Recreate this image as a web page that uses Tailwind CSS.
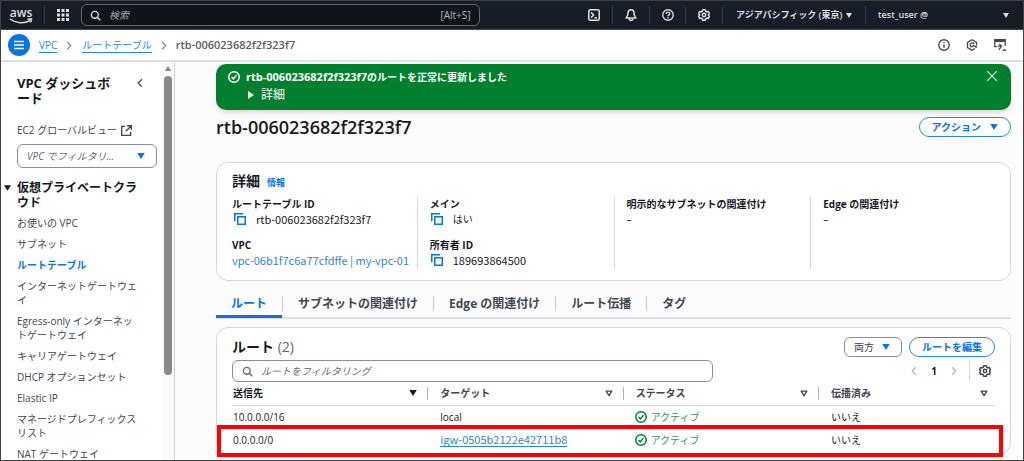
<!DOCTYPE html>
<html lang="ja">
<head>
  <meta charset="UTF-8" />
  <meta name="viewport" content="width=device-width, initial-scale=1.0" />
  <title>rtb-006023682f2f323f7 | VPC</title>
  <script src="https://cdn.jsdelivr.net/npm/@tailwindcss/browser@4"></script>
</head>
<body class="h-screen overflow-hidden flex flex-col border border-[#424242] bg-[#fcfcfd] text-[#16191f] text-[10px] leading-[14px] font-['Open_Sans','Noto_Sans_CJK_JP',sans-serif]">

  <svg class="hidden">
    <symbol id="search" viewBox="0 0 16 16"><g fill="none" stroke="currentColor" stroke-width="2"><circle cx="7" cy="7" r="5" /><path d="m10.5 10.5 4.5 4.5" /></g></symbol>
    <symbol id="gear" viewBox="0 0 16 16"><g fill="none" stroke="currentColor" stroke-width="2" stroke-linejoin="round"><path d="M6.3 1h3.4l.6 2 1.6.9 2-.5 1.3 2.8L13.800 8l1.400 1.800-1.300 2.800-2-.5-1.600.9-.6 2H6.300l-.6-2-1.600-.9-2 .5L.8 9.800 2.200 8 .8 6.200l1.300-2.800 2 .5L5.700 3z" /><circle cx="8" cy="8" r="2.200" /></g></symbol>
    <symbol id="check" viewBox="0 0 16 16"><g fill="none" stroke="currentColor" stroke-width="2"><circle cx="8" cy="8" r="7" /><path d="m4.800 8 2.400 2.500L11.300 5.500" /></g></symbol>
    <symbol id="copy" viewBox="0 0 16 16"><g fill="none" stroke="currentColor" stroke-width="2"><path d="M1 11V1h11" /><path d="M5 5H15V15H5z" /></g></symbol>
    <symbol id="down" viewBox="0 0 10 8"><path fill="currentColor" d="M0 0h10L5 8z" /></symbol>
    <symbol id="sort" viewBox="0 0 10 8"><path fill="none" stroke="currentColor" stroke-width="1.700" stroke-linejoin="round" d="M1.500 1h7L5 6.800z" /></symbol>
    <symbol id="next" viewBox="0 0 8 12"><path fill="none" stroke="currentColor" stroke-width="1.600" d="m1.500 1 5 5-5 5" /></symbol>
    <symbol id="prev" viewBox="0 0 8 12"><path fill="none" stroke="currentColor" stroke-width="1.600" d="m6.500 1-5 5 5 5" /></symbol>
  </svg>

  <!-- Global header -->
  <header class="h-[29px] shrink-0 flex items-center bg-[#161d26] text-[#dedee3] border-b border-[#424650]">
    <a href="#" class="ml-2 w-6 flex flex-col items-center" aria-label="aws">
      <span class="text-[12px] leading-[11px] font-semibold">aws</span>
      <svg class="w-6 h-[6px]" viewBox="0 0 24 6" fill="none" stroke="currentColor" stroke-width="1.500"><path d="M1 1c6 4.500 14 5 20 1.500M18.500 1h4l-1 3.500" /></svg>
    </a>
    <div class="ml-[11px] w-px h-[18px] bg-[#333b47]"></div>
    <button class="ml-3 w-3 h-3" aria-label="サービス">
      <svg class="w-3 h-3" viewBox="0 0 12 12" fill="currentColor"><path d="M0 0h3v3H0zM4.500 0h3v3h-3zM9 0h3v3H9zM0 4.500h3v3H0zM4.500 4.500h3v3h-3zM9 4.500h3v3H9zM0 9h3v3H0zM4.500 9h3v3h-3zM9 9h3v3H9z" /></svg>
    </button>
    <label class="ml-3 w-[39%] h-[22px] flex items-center gap-2 px-2 rounded-[6px] border border-[#656871] bg-[#0f141a]">
      <svg class="w-[11px] h-[11px]"><use href="#search" /></svg>
      <input type="search" placeholder="検索" aria-label="検索" class="flex-1 min-w-0 outline-none italic text-[10px] placeholder:text-[#a4a4ad]" />
      <span class="text-[#b4b4bb]">[Alt+S]</span>
    </label>
    <div class="ml-auto h-[18px] flex items-center divide-x divide-[#333b47]">
      <button class="w-[37px] h-full flex items-center justify-center" aria-label="CloudShell">
        <svg class="w-3 h-3" viewBox="0 0 16 16" fill="none" stroke="currentColor" stroke-width="2"><rect x="1" y="1" width="14" height="14" rx="2" /><path d="m4 4.500 3.500 3.500L4 11.500M8.500 11.500H12" /></svg>
      </button>
      <button class="w-[37px] h-full flex items-center justify-center" aria-label="通知">
        <svg class="w-3 h-3" viewBox="0 0 16 16" fill="none" stroke="currentColor" stroke-width="2" stroke-linejoin="round"><path d="M8 1C5 1 4 3.500 4 5.500c0 3-1 4-2.500 6.500h13C13 9.500 12 8.500 12 5.500 12 3.500 11 1 8 1z" /><path d="M5.500 12.500c0 3.500 5 3.500 5 0" /></svg>
      </button>
      <button class="w-[36px] h-full flex items-center justify-center" aria-label="ヘルプ">
        <svg class="w-3 h-3" viewBox="0 0 16 16" fill="none" stroke="currentColor" stroke-width="1.800"><circle cx="8" cy="8" r="7" /><path d="M5.700 6.500c0-3 4.600-3 4.600-.3C10.300 8 8 7.700 8 9.700M8 10.800v1.800" /></svg>
      </button>
      <button class="w-[37px] h-full flex items-center justify-center" aria-label="設定">
        <svg class="w-3 h-3"><use href="#gear" /></svg>
      </button>
      <button class="w-[143px] h-full flex items-center gap-1 px-[13px] text-[9px] font-semibold whitespace-nowrap">アジアパシフィック (東京)
        <svg class="w-[6px] h-[5px] shrink-0"><use href="#down" /></svg>
      </button>
      <button class="w-[157px] h-full flex items-center justify-between pl-3 pr-[14px] text-[9px] font-semibold">test_user @
        <svg class="w-[6px] h-[5px]"><use href="#down" /></svg>
      </button>
    </div>
  </header>

  <!-- Breadcrumb -->
  <nav class="h-[32px] shrink-0 flex items-center bg-white border-b-2 border-[#dedee3] pl-[7px] pr-[17px] text-[#424650]">
    <button class="w-[22px] h-[22px] rounded-full bg-[#0972e8] text-white flex items-center justify-center" aria-label="メニュー">
      <svg class="w-[10px] h-[10px]" viewBox="0 0 10 10" stroke="currentColor" stroke-width="1.500"><path d="M0 1.500h10M0 5h10M0 8.500h10" /></svg>
    </button>
    <a href="#" class="ml-[9px] text-[#2b86e0] border-b border-[#2b86e0]">VPC</a>
    <svg class="mx-[9px] w-[6px] h-[9px] text-[#8c8c94]"><use href="#next" /></svg>
    <a href="#" class="ml-px text-[#2b86e0] border-b border-[#2b86e0]">ルートテーブル</a>
    <svg class="mx-[9px] w-[6px] h-[9px] text-[#8c8c94]"><use href="#next" /></svg>
    <span class="text-[11px] font-semibold text-[#5a5d66]">rtb-006023682f2f323f7</span>
    <div class="ml-auto flex gap-4">
      <button aria-label="情報"><svg class="w-3 h-3" viewBox="0 0 16 16" fill="none" stroke="currentColor" stroke-width="1.700"><circle cx="8" cy="8" r="7" /><path d="M8 7v5M8 4v1.800" /></svg></button>
      <button aria-label="診断"><svg class="w-3 h-3" viewBox="0 0 16 16" fill="none" stroke="currentColor" stroke-width="1.700"><path d="M14 9V4.500L8 1 2 4.500v7L8 15l4-2.300" /><path d="M11 6.500C9.500 4.500 5.500 5 5.500 8s3 3 4 1M9 8l5.500 3.500" /></svg></button>
      <button aria-label="ターミナル"><svg class="w-3 h-3" viewBox="0 0 16 16" fill="none" stroke="currentColor" stroke-width="1.700"><path d="M3.500 10H1V1h14v8M1 3h14" /><path d="M5 9.500h5M7 6.500l3 3-3.500 5M11.500 15H16" /></svg></button>
    </div>
  </nav>

  <div class="flex-1 min-h-0 flex">
    <!-- Side navigation -->
    <aside class="w-[174px] shrink-0 flex bg-white border-r border-[#d0d0d6] overflow-hidden">
      <div class="flex-1 pl-4 pt-[14px] text-[#424650] break-all">
        <div class="flex items-start">
          <h2 class="w-[100px] text-[13px] leading-[15px] font-bold text-[#16191f]">VPC ダッシュボード</h2>
          <button class="ml-5 mt-[2px]" aria-label="閉じる"><svg class="w-[6px] h-[10px]"><use href="#prev" /></svg></button>
        </div>
        <a href="#" class="mt-[17px] flex items-center gap-1 whitespace-nowrap">EC2 グローバルビュー
          <svg class="w-[11px] h-[11px]" viewBox="0 0 16 16" fill="none" stroke="currentColor" stroke-width="2"><path d="M6 2H1v13h13v-5M9 1h6v6M15 1 7 9" /></svg>
        </a>
        <div class="mt-[7px] w-[140px] h-6 relative">
          <select aria-label="VPC でフィルタリング" class="w-full h-full appearance-none rounded-[6px] border border-[#8c8c94] bg-white pl-[9px] italic text-[#656871]">
            <option>VPC でフィルタリ...</option>
          </select>
          <svg class="absolute right-3 top-[9px] w-2 h-[6px] text-[#0972e8] pointer-events-none"><use href="#down" /></svg>
        </div>
        <details open class="mt-3">
          <summary class="list-none relative w-[125px] text-[12px] leading-[15px] font-bold text-[#16191f]">
            <svg class="absolute -left-[13px] top-[5px] w-[7px] h-[6px]"><use href="#down" /></svg>仮想プライベートクラウド
          </summary>
          <ul class="mt-[6px] w-[125px] flex flex-col gap-[7px]">
            <li><a href="#">お使いの VPC</a></li>
            <li><a href="#">サブネット</a></li>
            <li><a href="#" class="font-bold text-[#0972e8]">ルートテーブル</a></li>
            <li><a href="#">インターネットゲートウェイ</a></li>
            <li><a href="#">Egress-only インターネットゲートウェイ</a></li>
            <li><a href="#">キャリアゲートウェイ</a></li>
            <li><a href="#">DHCP オプションセット</a></li>
            <li><a href="#">Elastic IP</a></li>
            <li><a href="#">マネージドプレフィックスリスト</a></li>
            <li><a href="#">NAT ゲートウェイ</a></li>
          </ul>
        </details>
      </div>
      <!-- scrollbar -->
      <div class="w-3 shrink-0 bg-[#fafafa] flex flex-col items-center pt-[4px]">
        <svg class="w-2 h-[5px] rotate-180 text-[#858585]"><use href="#down" /></svg>
        <div class="mt-[5px] w-2 h-[76%] rounded-full bg-[#8a8a8a]"></div>
      </div>
    </aside>

    <main class="flex-1 min-w-0 pl-[41px] pr-3 pt-[2px]">
      <!-- Flash message -->
      <div class="h-[46px] flex items-start rounded-[10px] bg-[#00802f] text-white px-3 pt-[6px] shadow-md">
        <svg class="mt-px w-3 h-3"><use href="#check" /></svg>
        <div class="ml-[6px] font-bold">
          <p><span class="text-[11px]">rtb-006023682f2f323f7</span>のルートを正常に更新しました</p>
          <button class="mt-[4px] ml-[2px] flex items-center gap-[7px] text-[12px] leading-[14px] font-normal">
            <svg class="w-[6px] h-2" viewBox="0 0 6 8"><path fill="currentColor" d="M0 0v8l6-4z" /></svg>詳細
          </button>
        </div>
        <button class="ml-auto mr-[2px] mt-px" aria-label="閉じる"><svg class="w-[10px] h-[10px]" viewBox="0 0 10 10" stroke="#d5ead9" stroke-width="1.200"><path d="m0 0 10 10M10 0 0 10" /></svg></button>
      </div>

      <div class="mt-[7px] h-5 flex items-center justify-between">
        <h1 class="text-[18px] leading-5 font-semibold">rtb-006023682f2f323f7</h1>
        <button class="h-5 px-3 flex items-center gap-[9px] rounded-full border border-[#2b86e0] bg-white font-bold text-[#0972e8]">アクション
          <svg class="w-2 h-[6px]"><use href="#down" /></svg>
        </button>
      </div>

      <!-- Details -->
      <section class="mt-[25px] h-[119px] rounded-[12px] border border-[#d5d5da] bg-white px-[3px] pt-[9px]">
        <h2 class="px-3 flex items-baseline gap-[7px] text-[14px] leading-[18px] font-bold">詳細 <a href="#" class="text-[9px] text-[#0972e8]">情報</a></h2>
        <div class="mt-[5px] h-[71px] grid grid-cols-4">
          <dl class="pl-3">
            <dt class="font-bold">ルートテーブル ID</dt>
            <dd class="mt-px pl-[2px] flex items-center gap-[10px] text-[11px] font-['Noto_Sans_CJK_JP',sans-serif]"><svg class="w-3 h-3 text-[#0972e8]"><use href="#copy" /></svg>rtb-006023682f2f323f7</dd>
            <dt class="mt-3 font-bold">VPC</dt>
            <dd class="mt-px text-[11px] font-['Noto_Sans_CJK_JP',sans-serif] whitespace-nowrap"><a href="#" class="text-[#2b86e0]">vpc-06b1f7c6a77cfdffe | my-vpc-01</a></dd>
          </dl>
          <dl class="pl-3 border-l border-[#d5d5da]">
            <dt class="font-bold">メイン</dt>
            <dd class="mt-px pl-px flex items-center gap-[10px]"><svg class="w-3 h-3 text-[#0972e8]"><use href="#copy" /></svg>はい</dd>
            <dt class="mt-3 font-bold">所有者 ID</dt>
            <dd class="mt-px pl-px flex items-center gap-[10px] text-[11px] font-['Noto_Sans_CJK_JP',sans-serif]"><svg class="w-3 h-3 text-[#0972e8]"><use href="#copy" /></svg>189693864500</dd>
          </dl>
          <dl class="pl-3 border-l border-[#d5d5da]">
            <dt class="font-bold">明示的なサブネットの関連付け</dt>
            <dd class="mt-px">–</dd>
          </dl>
          <dl class="pl-3 border-l border-[#d5d5da]">
            <dt class="font-bold">Edge の関連付け</dt>
            <dd class="mt-px">–</dd>
          </dl>
        </div>
      </section>

      <!-- Tabs -->
      <div role="tablist" class="mt-[5px] h-[33px] flex items-start border-b-2 border-[#dedee3] text-[12px] leading-[14px] font-bold text-[#424650]">
        <button role="tab" aria-selected="true" class="h-8 px-[15px] pt-[6px] text-[#0972e8] border-b-3 border-[#0972e8]">ルート</button>
        <button role="tab" class="mt-[10px] h-[15px] px-[15px] border-l border-[#c6c6cd]">サブネットの関連付け</button>
        <button role="tab" class="mt-[10px] h-[15px] px-[15px] border-l border-[#c6c6cd]">Edge の関連付け</button>
        <button role="tab" class="mt-[10px] h-[15px] px-[15px] border-l border-[#c6c6cd]">ルート伝播</button>
        <button role="tab" class="mt-[10px] h-[15px] px-[15px] border-l border-[#c6c6cd]">タグ</button>
      </div>

      <!-- Routes -->
      <section class="mt-2 relative rounded-[12px] border border-[#d5d5da] bg-white px-[15px] pt-[9px] pb-[2px]">
        <div class="h-5 flex items-center">
          <h2 class="text-[14px] leading-5 font-bold">ルート <span class="font-normal text-[#656871]">(2)</span></h2>
          <div class="ml-auto relative w-[58px] h-5">
            <select aria-label="表示" class="w-full h-full appearance-none rounded-[6px] border border-[#8c8c94] bg-white pl-[9px] text-[#424650]"><option>両方</option></select>
            <svg class="absolute right-3 top-[7px] w-2 h-[6px] text-[#0972e8] pointer-events-none"><use href="#down" /></svg>
          </div>
          <button class="ml-[7px] h-5 px-3 rounded-full border border-[#2b86e0] bg-white font-bold text-[#0972e8]">ルートを編集</button>
        </div>
        <div class="mt-[3px] h-[22px] flex items-center text-[#656871]">
          <label class="w-[63%] h-full flex items-center gap-2 px-[9px] rounded-[6px] border border-[#8c8c94]">
            <svg class="w-[11px] h-[11px]"><use href="#search" /></svg>
            <input type="search" placeholder="ルートをフィルタリング" aria-label="ルートをフィルタリング" class="flex-1 min-w-0 outline-none italic text-[10px] placeholder:text-[#656871]" />
          </label>
          <button class="ml-auto" aria-label="前へ"><svg class="w-[6px] h-[10px] text-[#b4b4bb]"><use href="#prev" /></svg></button>
          <span class="w-[34px] text-center font-bold text-[#16191f]">1</span>
          <button aria-label="次へ"><svg class="w-[6px] h-[10px] text-[#b4b4bb]"><use href="#next" /></svg></button>
          <div class="ml-3 mr-[9px] w-px h-5 bg-[#d5d5da]"></div>
          <button class="mr-1" aria-label="設定"><svg class="w-3 h-3 text-[#424650]"><use href="#gear" /></svg></button>
        </div>
        <table class="w-full table-fixed text-left">
          <thead>
            <tr class="h-[23px] border-b border-[#d5d5da] font-bold text-[#424650]">
              <th class="w-[25.6%] p-0 text-[#16191f]"><div class="h-[13px] flex items-center justify-between pl-px pr-[10px]">送信先 <svg class="w-2 h-[6px]"><use href="#down" /></svg></div></th>
              <th class="w-[25.6%] p-0"><div class="h-[13px] flex items-center justify-between pl-3 pr-[10px] border-l border-[#b4b4bb]">ターゲット <svg class="w-2 h-[7px]"><use href="#sort" /></svg></div></th>
              <th class="w-[25.6%] p-0"><div class="h-[13px] flex items-center justify-between pl-3 pr-[10px] border-l border-[#b4b4bb]">ステータス <svg class="w-2 h-[7px]"><use href="#sort" /></svg></div></th>
              <th class="p-0"><div class="h-[13px] flex items-center justify-between pl-3 pr-[7px] border-l border-[#b4b4bb]">伝播済み <svg class="w-2 h-[7px]"><use href="#sort" /></svg></div></th>
            </tr>
          </thead>
          <tbody class="text-[#16191f]">
            <tr class="h-[23px] border-b border-[#e5e5e9]">
              <td class="p-0 pl-px">10.0.0.0/16</td>
              <td class="p-0 pl-[13px]">local</td>
              <td class="p-0 pl-3"><span class="flex items-center gap-1 text-[#2f9a55]"><svg class="w-3 h-3 text-[#00802f]"><use href="#check" /></svg>アクティブ</span></td>
              <td class="p-0 pl-[13px]">いいえ</td>
            </tr>
            <tr class="h-[24px]">
              <td class="p-0 pl-px">0.0.0.0/0</td>
              <td class="p-0 pl-[13px] text-[11px] leading-[13px] font-['Noto_Sans_CJK_JP',sans-serif]"><a href="#" class="inline-block text-[#2b86e0] border-b border-[#2b86e0]">igw-0505b2122e42711b8</a></td>
              <td class="p-0 pl-3"><span class="flex items-center gap-1 text-[#2f9a55]"><svg class="w-3 h-3 text-[#00802f]"><use href="#check" /></svg>アクティブ</span></td>
              <td class="p-0 pl-[13px]">いいえ</td>
            </tr>
          </tbody>
        </table>
        <!-- highlight around the new route -->
        <div class="absolute left-0 right-[7px] -bottom-[3px] h-8 border-4 border-[#ff0000] pointer-events-none"></div>
      </section>
    </main>
  </div>
</body>
</html>
